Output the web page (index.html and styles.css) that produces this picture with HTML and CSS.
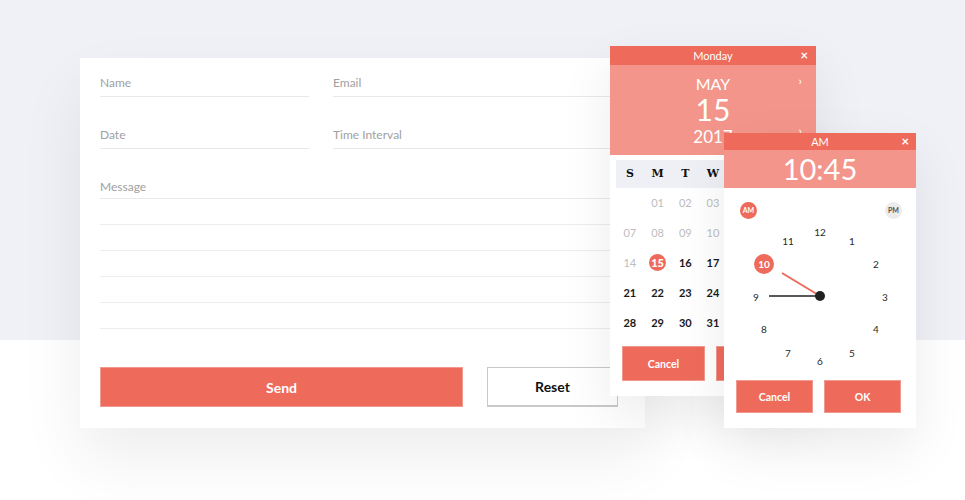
FILE: index.html
```html
<!DOCTYPE html>
<html>
<head>
<meta charset="utf-8">
<link rel="stylesheet" href="styles.css">
</head>
<body>
<div class="stage">
  <form class="card">
    <div class="grid">
      <div class="field f1"><span>Name</span></div>
      <div class="field f1"><span>Email</span></div>
      <div class="field f2"><span>Date</span></div>
      <div class="field f2"><span>Time Interval</span></div>
    </div>
    <div class="field f3"><span>Message</span></div>
    <div class="line"></div>
    <div class="line"></div>
    <div class="line"></div>
    <div class="line"></div>
    <div class="line"></div>
    <div class="actions">
      <button type="button" class="btn-send">Send</button>
      <button type="button" class="btn-reset">Reset</button>
    </div>
  </form>

  <div class="calendar">
    <div class="pop-head">Monday<span class="close">×</span></div>
    <div class="cal-top">
      <div class="month">MAY</div>
      <div class="day">15</div>
      <div class="year">2017</div>
      <span class="chev chev1">›</span>
      <span class="chev chev2">›</span>
    </div>
    <div class="cal-body">
      <div class="dow"><span>S</span><span>M</span><span>T</span><span>W</span><span>T</span><span>F</span><span>S</span></div>
      <div class="week"><span></span><span class="mute">01</span><span class="mute">02</span><span class="mute">03</span><span class="mute">04</span><span class="mute">05</span><span class="mute">06</span></div>
      <div class="week"><span class="mute">07</span><span class="mute">08</span><span class="mute">09</span><span class="mute">10</span><span class="mute">11</span><span class="mute">12</span><span class="mute">13</span></div>
      <div class="week"><span class="mute">14</span><span><b class="sel">15</b></span><span>16</span><span>17</span><span>18</span><span>19</span><span>20</span></div>
      <div class="week"><span>21</span><span>22</span><span>23</span><span>24</span><span>25</span><span>26</span><span>27</span></div>
      <div class="week"><span>28</span><span>29</span><span>30</span><span>31</span><span></span><span></span><span></span></div>
      <div class="pop-actions cal-actions">
        <button type="button">Cancel</button>
        <button type="button">OK</button>
      </div>
    </div>
  </div>

  <div class="timer">
    <div class="pop-head">AM<span class="close">×</span></div>
    <div class="time-top">10:45</div>
    <div class="clock">
      <span class="ampm am">AM</span>
      <span class="ampm pm">PM</span>
      <svg class="hands" width="192" height="192" viewBox="0 0 192 192">
        <line x1="45" y1="108" x2="96" y2="108" stroke="#222" stroke-width="1.5"/>
        <line x1="58" y1="85" x2="96" y2="108" stroke="#ee6b5b" stroke-width="2"/>
        <circle cx="96" cy="108" r="5" fill="#222"/>
      </svg>
      <span class="num" style="left:96px;top:44px">12</span>
      <span class="num" style="left:128px;top:53px">1</span>
      <span class="num" style="left:152px;top:76px">2</span>
      <span class="num" style="left:161px;top:109px">3</span>
      <span class="num" style="left:152px;top:141px">4</span>
      <span class="num" style="left:128px;top:165px">5</span>
      <span class="num" style="left:96px;top:173px">6</span>
      <span class="num" style="left:64px;top:165px">7</span>
      <span class="num" style="left:40px;top:141px">8</span>
      <span class="num" style="left:32px;top:109px">9</span>
      <span class="num sel10" style="left:40px;top:76px">10</span>
      <span class="num" style="left:64px;top:53px">11</span>
    </div>
    <div class="pop-actions time-actions">
      <button type="button">Cancel</button>
      <button type="button">OK</button>
    </div>
  </div>
</div>
</body>
</html>
```
FILE: styles.css
```css
* { box-sizing: border-box; }
html, body { margin: 0; padding: 0; }
body {
  width: 965px;
  height: 500px;
  overflow: hidden;
  font-family: Lato, "Open Sans", sans-serif;
  background: linear-gradient(#f0f1f6 0, #f0f1f6 340px, #ffffff 340px);
}
.stage {
  position: relative;
  width: 965px;
  height: 500px;
  padding-top: 58px;
  padding-left: 80px;
}
.card {
  width: 565px;
  height: 370px;
  background: #fff;
  padding: 0 20px 0 20px;
  box-shadow: 0 30px 60px rgba(0,0,0,0.07);
}
.grid {
  display: grid;
  grid-template-columns: 209px 1fr;
  column-gap: 24px;
}
.field {
  display: flex;
  align-items: flex-end;
  border-bottom: 1px solid #e9e9ec;
  font-size: 12px;
  color: #a0a0a0;
  padding-bottom: 6px;
}
.f1 { height: 39px; }
.f2 { height: 52px; }
.f3 { height: 50px; padding-bottom: 4px; }
.line {
  height: 26px;
  border-bottom: 1.5px solid #ececef;
}
.actions {
  display: flex;
  gap: 24px;
  margin-top: 38px;
}
.actions button {
  height: 40px;
  font-family: Lato, sans-serif;
  font-weight: 700;
  font-size: 14px;
  cursor: pointer;
}
.btn-send {
  width: 363px;
  background: #ee6b5b;
  color: #fff;
  border: 1px solid #f19a90;
}
.btn-reset {
  width: 131px;
  background: #fff;
  color: #111;
  border: 1px solid #c9c9c9;
  border-bottom-width: 2px;
}

/* popups */
.calendar, .timer {
  position: absolute;
  background: #fff;
  box-shadow: 0 20px 50px rgba(0,0,0,0.08);
}
.pop-head {
  position: relative;
  background: #ee6b5b;
  color: #fff;
  font-size: 11px;
  text-align: center;
}
.close {
  position: absolute;
  right: 7px;
  top: 0;
  font-size: 13px;
  font-weight: 700;
}
.calendar {
  left: 610px;
  top: 46px;
  width: 206px;
  height: 350px;
}
.calendar .pop-head { height: 19px; line-height: 19px; }
.calendar .close { right: 8px; }
.cal-top {
  position: relative;
  height: 90px;
  background: #f3958a;
  color: #fff;
  text-align: center;
  padding-top: 10px;
}
.month { font-size: 16px; line-height: 18px; }
.day { font-size: 30px; line-height: 30px; margin-top: 1px; }
.year { font-size: 17px; line-height: 18px; margin-top: 4px; }
.chev {
  position: absolute;
  right: 14px;
  font-size: 12px;
  line-height: 12px;
}
.chev1 { top: 10px; }
.chev2 { top: 60px; }
.cal-body { padding: 5px 6px 0 6px; }
.dow, .week {
  display: grid;
  grid-template-columns: repeat(7, 1fr);
  text-align: center;
}
.dow {
  height: 28px;
  line-height: 28px;
  background: #eef0f5;
  font-family: "DejaVu Serif", serif;
  font-weight: 700;
  font-size: 11px;
  color: #111;
}
.week {
  height: 30px;
  line-height: 30px;
  font-size: 11px;
  font-weight: 700;
  color: #1a1a1a;
}
.week .mute { color: #bdbdbd; font-weight: 400; }
.sel {
  display: inline-block;
  width: 17px;
  height: 17px;
  line-height: 17px;
  border-radius: 50%;
  background: #ee6b5b;
  color: #fff;
}
.pop-actions {
  display: flex;
}
.pop-actions button {
  background: #ee6b5b;
  color: #fff;
  border: 1px solid #f19a90;
  font-family: Lato, sans-serif;
  font-weight: 700;
  font-size: 10.5px;
}
.cal-actions {
  gap: 11px;
  padding: 8px 6px 0 6px;
}
.cal-actions button { width: 83px; height: 35px; }

.timer {
  left: 724px;
  top: 133px;
  width: 192px;
  height: 295px;
}
.timer .pop-head { height: 17px; line-height: 17px; }
.time-top {
  height: 38px;
  line-height: 38px;
  background: #f3958a;
  color: #fff;
  font-size: 29px;
  text-align: center;
}
.clock {
  position: relative;
  height: 192px;
}
.hands { position: absolute; left: 0; top: 0; }
.ampm {
  position: absolute;
  top: 14px;
  width: 17px;
  height: 17px;
  line-height: 17px;
  border-radius: 50%;
  font-size: 7px;
  font-weight: 700;
  text-align: center;
}
.am { left: 16px; background: #ee6b5b; color: #fff; }
.pm { left: 161px; background: #ececec; color: #555; }
.num {
  position: absolute;
  transform: translate(-50%, -50%);
  font-size: 10px;
  color: #2a2a2a;
  line-height: 12px;
}
.sel10 {
  width: 20px;
  height: 20px;
  line-height: 20px;
  border-radius: 50%;
  background: #ee6b5b;
  color: #fff;
  text-align: center;
  font-weight: 700;
}
.time-actions {
  gap: 11px;
  padding: 0 12px;
}
.time-actions button { width: 77px; height: 33px; }
```
